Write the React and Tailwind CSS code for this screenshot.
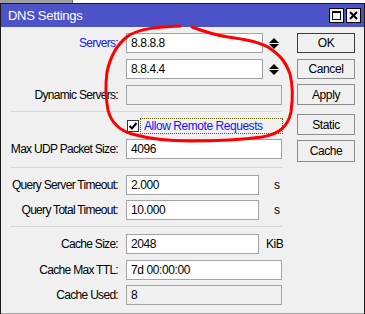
import React from "react";

const font = { fontFamily: '"Liberation Sans", Arial, sans-serif' };

function Label({ children, blue }) {
  return (
    <div className={`w-[118px] shrink-0 text-right pr-[1px] whitespace-nowrap text-[12px] tracking-[-0.7px] leading-[14px] ${blue ? "text-[#1515ff]" : "text-[#000]"}`}>
      {children}
    </div>
  );
}

function Input({ value, w, disabled }) {
  return (
    <div
      className={`h-[20px] ${w} border border-[#a3a3a3] ${disabled ? "bg-[#f0f0f0]" : "bg-white"} pl-[4px] whitespace-nowrap text-[12px] tracking-[-0.4px] leading-[18px] text-[#000]`}
    >
      {value}
    </div>
  );
}

function Spinner() {
  return (
    <div className="ml-[6px] flex flex-col items-center gap-[1px]">
      <div className="w-0 h-0 border-l-[5px] border-r-[5px] border-b-[5px] border-l-transparent border-r-transparent border-b-black" />
      <div className="w-0 h-0 border-l-[5px] border-r-[5px] border-t-[5px] border-l-transparent border-r-transparent border-t-black" />
    </div>
  );
}

function Row({ label, blue, children, className = "" }) {
  return (
    <div className={`flex items-center h-[20px] ${className}`}>
      <Label blue={blue}>{label}</Label>
      <div className="ml-[7px] flex items-center">{children}</div>
    </div>
  );
}

function Btn({ children, h, className = "", def }) {
  return (
    <div
      className={`w-[58px] ${h} flex items-center justify-center text-[12px] tracking-[-0.4px] text-black bg-[#f0f0f0] border ${def ? "border-[#3c3c3c]" : "border-[#8c8c8c]"} ${className}`}
    >
      {children}
    </div>
  );
}

function Sep({ className = "" }) {
  return <div className={`h-[1px] w-[272px] ml-[9px] bg-[#d7d7d7] ${className}`} />;
}

export default function App() {
  return (
    <div className="relative w-[365px] h-[314px] overflow-hidden bg-white" style={font}>
      <div className="flex h-[3px]">
        <div className="w-[73px] bg-[#a0a0a0] border-r border-[#6a6a6a]" />
        <div className="flex-1 bg-white" />
      </div>
      <div className="h-[311px] border-t border-l border-r border-[#1a1a1a] flex flex-col">
        <div className="h-[23px] bg-[#4c53c9] flex items-center pl-[7px] pr-[3px]">
          <span className="text-white text-[13px] tracking-[-0.3px] leading-[15px]">DNS Settings</span>
          <div className="ml-auto flex gap-[2px]">
            <div className="w-[15px] h-[15px] bg-[#f0f0f0] border border-black flex items-center justify-center">
              <div className="w-[9px] h-[9px] border border-black border-t-2" />
            </div>
            <div className="w-[15px] h-[15px] bg-[#f0f0f0] border border-black flex items-center justify-center">
              <svg width="9" height="9" viewBox="0 0 9 9">
                <path d="M1 1 L8 8 M8 1 L1 8" stroke="black" strokeWidth="2" />
              </svg>
            </div>
          </div>
        </div>
        <div className="flex-1 bg-[#f0f0f0] flex border-b border-[#a0a0a0]">
          <div className="w-[283px] pt-[6px] flex flex-col">
            <Row label="Servers:" blue>
              <Input value="8.8.8.8" w="w-[137px]" />
              <Spinner />
            </Row>
            <Row label="" className="mt-[6px]">
              <Input value="8.8.4.4" w="w-[137px]" />
              <Spinner />
            </Row>
            <Row label="Dynamic Servers:" className="mt-[6px]">
              <Input value="" w="w-[156px]" disabled />
            </Row>
            <Sep className="mt-[6px]" />
            <div className="flex items-center h-[16px] mt-[6px] pl-[126px]">
              <div className="w-[12px] h-[12px] bg-white border border-[#333] flex items-center justify-center">
                <svg width="10" height="10" viewBox="0 0 10 10">
                  <path d="M1.5 5 L4 7.5 L8.5 2" stroke="black" strokeWidth="2" fill="none" />
                </svg>
              </div>
              <div className="ml-[1px] h-[16px] w-[143px] border border-dotted border-[#5a5a00] bg-[#f0f0f0] pl-[3px] whitespace-nowrap text-[12px] tracking-[-0.45px] leading-[14px] text-[#1515ff]">
                Allow Remote Requests
              </div>
            </div>
            <Row label="Max UDP Packet Size:" className="mt-[5px]">
              <Input value="4096" w="w-[156px]" />
            </Row>
            <Sep className="mt-[8px]" />
            <Row label="Query Server Timeout:" className="mt-[7px]">
              <Input value="2.000" w="w-[133px]" />
              <span className="ml-[15px] text-[12px]">s</span>
            </Row>
            <Row label="Query Total Timeout:" className="mt-[5px]">
              <Input value="10.000" w="w-[133px]" />
              <span className="ml-[15px] text-[12px]">s</span>
            </Row>
            <Sep className="mt-[6px]" />
            <Row label="Cache Size:" className="mt-[7px]">
              <Input value="2048" w="w-[133px]" />
              <span className="ml-[7px] text-[12px] tracking-[-0.4px]">KiB</span>
            </Row>
            <Row label="Cache Max TTL:" className="mt-[6px]">
              <Input value="7d 00:00:00" w="w-[156px]" />
            </Row>
            <Row label="Cache Used:" className="mt-[5px]">
              <Input value="8" w="w-[156px]" disabled />
            </Row>
          </div>
          <div className="ml-[13px] pt-[6px] flex flex-col">
            <Btn h="h-[20px]" def>OK</Btn>
            <Btn h="h-[20px]" className="mt-[6px]">Cancel</Btn>
            <Btn h="h-[21px]" className="mt-[5px]">Apply</Btn>
            <Btn h="h-[21px]" className="mt-[9px]">Static</Btn>
            <Btn h="h-[22px]" className="mt-[5px]">Cache</Btn>
          </div>
        </div>
      </div>
      <svg className="absolute left-0 top-0 pointer-events-none" width="365" height="314" viewBox="0 0 365 314">
        <path
          d="M180 26 C160 27 140 28 128 36 C116 45 110 58 107 72 C105 88 106 100 108 110 C111 122 118 130 132 134 C150 139 170 141 190 141 C215 141 240 140 262 137 C280 134 288 126 291 112 C293 98 293 86 290 74 C286 62 280 55 268 47 C256 41 242 39 228 37 C214 35 200 30 192 27"
          stroke="#ff0000"
          strokeWidth="3"
          fill="none"
          strokeLinecap="round"
        />
      </svg>
    </div>
  );
}
